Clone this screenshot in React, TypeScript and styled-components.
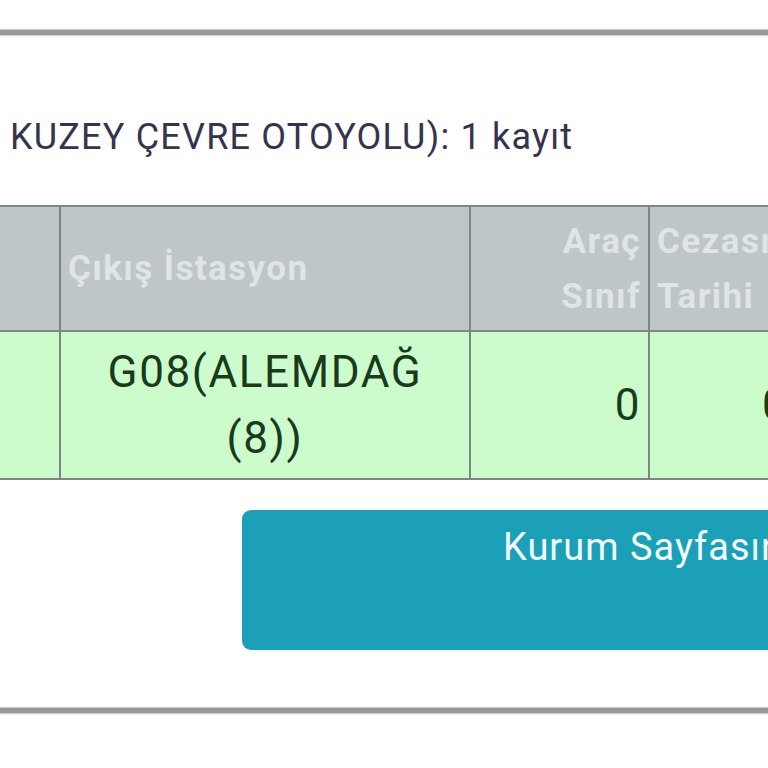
import styled, { createGlobalStyle } from 'styled-components'

const Global = createGlobalStyle`
	html, body {
		margin: 0;
		padding: 0;
		background: #ffffff;
		overflow: hidden;
	}
	body {
		font-family: Roboto, 'Liberation Sans', sans-serif;
	}
`

const Page = styled.div`
	width: 768px;
	height: 768px;
	overflow: hidden;
	padding-top: 30px;
	box-sizing: border-box;
`

const Rule = styled.div`
	height: 5px;
	background: #989898;
	box-shadow: 0 0 1px 1px #cfcfcf;
`

const Caption = styled.p`
	margin: 0;
	padding: 80px 0 0 10px;
	height: 90px;
	font-size: 36px;
	letter-spacing: 1.2px;
	line-height: 44px;
	color: #35344f;
	white-space: nowrap;
`

const Table = styled.table`
	border-collapse: collapse;
	table-layout: fixed;
	width: 1000px;
	margin-left: -2px;
`

const Col = styled.col<{ $w: number }>`
	width: ${p => p.$w}px;
`

const Head = styled.th<{ $align?: string }>`
	height: 123px;
	padding: 0 7px;
	background: #bec6c8;
	border: 2px solid #7e8880;
	color: #dfe4e6;
	font-size: 35px;
	letter-spacing: 1.4px;
	font-weight: 700;
	line-height: 55px;
	text-align: ${p => p.$align || 'left'};
	vertical-align: middle;
	overflow: hidden;
	white-space: nowrap;
`

const Cell = styled.td<{ $align?: string; $pad?: number }>`
	height: 146px;
	padding: 0 7px 0 ${p => p.$pad ?? 7}px;
	background: #ccfccc;
	border: 2px solid #7e8880;
	color: #1b3a1d;
	font-size: 44px;
	letter-spacing: 1.6px;
	line-height: 66px;
	text-align: ${p => p.$align || 'center'};
	vertical-align: middle;
	overflow: hidden;
	white-space: nowrap;
`

const Actions = styled.div`
	display: flex;
	padding: 30px 0 0 242px;
	height: 228px;
	box-sizing: border-box;
`

const Button = styled.button`
	flex: none;
	width: 780px;
	height: 140px;
	border: none;
	border-radius: 9px;
	background: #1ba0b7;
	color: #f3ffff;
	font-family: Roboto, 'Liberation Sans', sans-serif;
	font-size: 38px;
	letter-spacing: 1px;
	line-height: 44px;
	padding: 15px 0 0 261px;
	text-align: left;
	display: flex;
	align-items: flex-start;
	white-space: nowrap;
`

export default function App() {
	return (
		<>
			<Global />
			<Page>
				<Rule />
				<Caption>KUZEY ÇEVRE OTOYOLU): 1 kayıt</Caption>
				<Table>
					<colgroup>
						<Col $w={61} />
						<Col $w={410} />
						<Col $w={179} />
						<Col $w={350} />
					</colgroup>
					<thead>
						<tr>
							<Head />
							<Head>Çıkış İstasyon</Head>
							<Head $align="right">
								Araç
								<br />
								Sınıf
							</Head>
							<Head>
								Cezası
								<br />
								Tarihi
							</Head>
						</tr>
					</thead>
					<tbody>
						<tr>
							<Cell />
							<Cell>
								G08(ALEMDAĞ
								<br />
								(8))
							</Cell>
							<Cell $align="right">0</Cell>
							<Cell $align="left" $pad={112}>
								01.01.0001
							</Cell>
						</tr>
					</tbody>
				</Table>
				<Actions>
					<Button>Kurum Sayfasına Dön</Button>
				</Actions>
				<Rule />
			</Page>
		</>
	)
}
